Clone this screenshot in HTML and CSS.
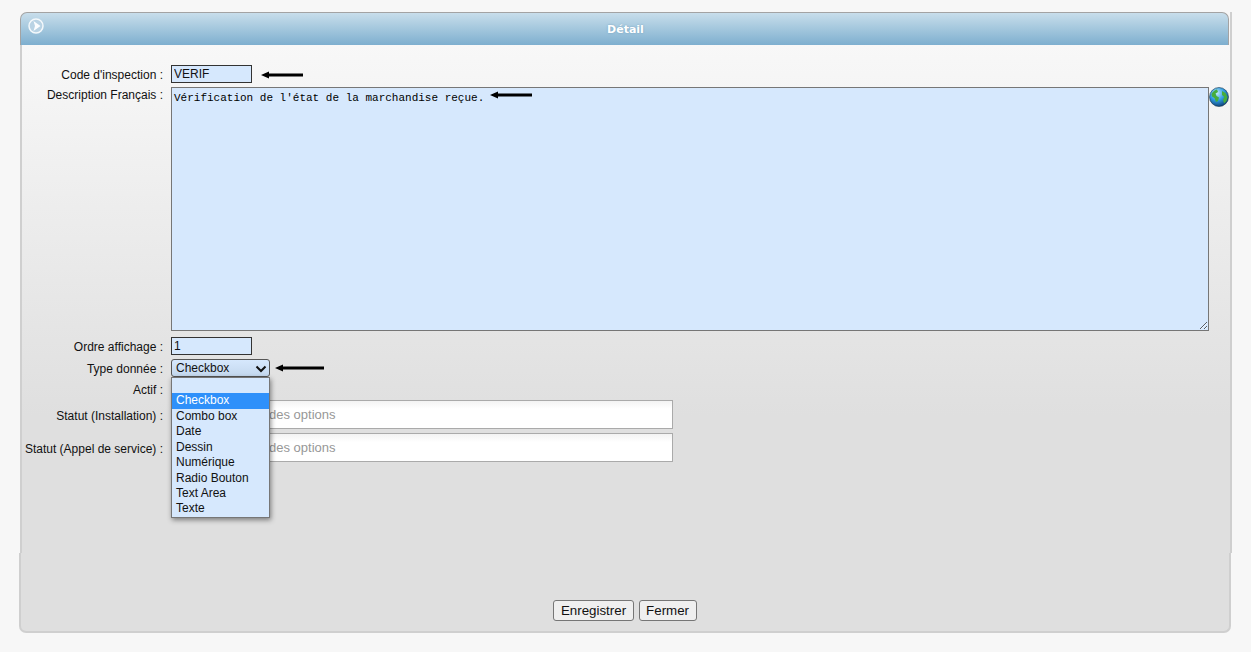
FILE: index.html
```html
<!DOCTYPE html>
<html lang="fr">
<head>
<meta charset="utf-8">
<title>Détail</title>
<link rel="stylesheet" href="styles.css">
</head>
<body>
<div class="panel">
  <div class="head">
    <svg class="head-icon" width="18" height="18" viewBox="0 0 18 18"><circle cx="9" cy="9" r="7" fill="#b9d3e4" stroke="#f4f8fb" stroke-width="1.500"/><path d="M6.500 4 13.500 9 6.500 14 8 9Z" fill="#fbfdfe"/></svg>
    <span class="head-title">Détail</span>
  </div>
  <div class="body">
    <form class="form">
      <label class="lbl lbl-code">Code d'inspection :</label>
      <div class="fld row-code">
        <input class="inp inp-short" type="text" value="VERIF">
        <svg class="arrow arrow-code" width="44" height="8" viewBox="0 0 44 8"><path d="M0 4 8 .5V2.500H42V5.500H8V7.500Z" fill="#000"/></svg>
      </div>
      <label class="lbl lbl-desc">Description Français :</label>
      <div class="fld row-desc">
        <textarea class="area">Vérification de l'état de la marchandise reçue.</textarea>
        <svg class="globe" width="20" height="20" viewBox="0 0 20 20"><defs><radialGradient id="g" cx=".4" cy=".3" r=".75"><stop offset="0" stop-color="#bfeaf8"/><stop offset=".5" stop-color="#2f9be0"/><stop offset="1" stop-color="#0b3a70"/></radialGradient></defs><circle cx="10" cy="10" r="9.500" fill="url(#g)" stroke="#12344d" stroke-width=".6"/><path d="M2.500 7C4 4.500 6 3 8 2.600L9 5 6.500 6.500 7.500 9 10 10.500 9 14 7 15 5.500 11 3 9.500ZM13 4 16.500 6 18.500 10 17.500 14 15 16.500 14 12.500 15.500 10 13 8Z" fill="#45ad3c"/></svg>
        <svg class="arrow arrow-desc" width="44" height="8" viewBox="0 0 44 8"><path d="M0 4 8 .5V2.500H42V5.500H8V7.500Z" fill="#000"/></svg>
      </div>
      <label class="lbl">Ordre affichage :</label>
      <div class="fld row-ordre"><input class="inp inp-short" type="text" value="1"></div>
      <label class="lbl">Type donnée :</label>
      <div class="fld row-type">
        <div class="select">Checkbox
          <svg class="chev" width="12" height="8" viewBox="0 0 12 8"><path d="M1.500 1.500 6 6 10.500 1.500" fill="none" stroke="#111" stroke-width="2"/></svg>
        </div>
        <svg class="arrow arrow-type" width="50" height="8" viewBox="0 0 50 8"><path d="M0 4 8 .5V2.500H49V5.500H8V7.500Z" fill="#000"/></svg>
        <ul class="menu">
          <li class="opt opt-empty"></li>
          <li class="opt opt-sel">Checkbox</li>
          <li class="opt">Combo box</li>
          <li class="opt">Date</li>
          <li class="opt">Dessin</li>
          <li class="opt">Numérique</li>
          <li class="opt">Radio Bouton</li>
          <li class="opt">Text Area</li>
          <li class="opt">Texte</li>
        </ul>
      </div>
      <label class="lbl lbl-actif">Actif :</label>
      <div class="fld row-actif"></div>
      <label class="lbl lbl-multi">Statut (Installation) :</label>
      <div class="fld"><div class="multi">des options</div></div>
      <label class="lbl lbl-multi">Statut (Appel de service) :</label>
      <div class="fld"><div class="multi">des options</div></div>
    </form>
  </div>
</div>
<div class="foot">
  <button class="btn" type="button">Enregistrer</button>
  <button class="btn" type="button">Fermer</button>
</div>
</body>
</html>
```
FILE: styles.css
```css
* { box-sizing: border-box; }
html, body { margin: 0; height: 100%; }
body {
  background: #f7f7f7;
  font-family: "Liberation Sans", Arial, sans-serif;
  font-size: 12px;
  color: #111;
  padding: 12px 0 0 20px;
  overflow: hidden;
}
.panel {
  width: 1212px;
  height: 541px;
  display: flex;
  flex-direction: column;
  border-right: 2px solid #cfcfcf;
}
.head {
  height: 33px;
  margin-right: 1px;
  border: 1px solid #a3a3a3;
  border-bottom: 0;
  border-radius: 7px 7px 0 0;
  background: linear-gradient(#c8deeb, #7eafcf);
  display: flex;
  align-items: center;
  justify-content: center;
  position: relative;
}
.head-icon { position: absolute; left: 6px; top: 4px; }
.head-title {
  color: #fff;
  font: bold 11px "DejaVu Sans", Verdana, sans-serif;
  margin-left: 2px;
  text-shadow: 0 0 2px #6f9dbb;
}
.body {
  flex: 1;
  border-left: 2px solid #cfcfcf;
  background: linear-gradient(#f8f8f8 0, #dfdfdf 370px, #dfdfdf 100%);
}
.form {
  display: grid;
  grid-template-columns: 141px 1fr;
  column-gap: 8px;
  row-gap: 4px;
  padding: 20px 0 0 0;
  align-items: start;
}
.lbl {
  text-align: right;
  height: 18px;
  line-height: 20px;
  white-space: nowrap;
}
.lbl-desc { line-height: 17px; }
.lbl-actif { height: 15px; line-height: 19px; }
.lbl-multi { height: 29px; line-height: 32px; }
.fld { position: relative; min-height: 18px; }
.inp {
  display: block;
  height: 18px;
  border: 1px solid #333;
  background: #d6e8fd;
  font: 12px "Liberation Sans", Arial, sans-serif;
  color: #111;
  padding: 0 2px;
  outline: none;
}
.inp-short { width: 81px; }
.row-code, .row-ordre { height: 18px; }
.row-desc { height: 246px; }
.area {
  display: block;
  width: 1038px;
  height: 244px;
  border: 1px solid #767676;
  background: #d6e8fd;
  font: 11px/13px "Liberation Mono", "Courier New", monospace;
  color: #000;
  padding: 4px 2px;
  outline: none;
}
.arrow { position: absolute; }
.arrow-code { left: 90px; top: 6px; }
.arrow-desc { left: 319px; top: 4px; }
.arrow-type { left: 104px; top: 5px; }
.globe { position: absolute; left: 1038px; top: 0; }
.select {
  width: 99px;
  height: 18px;
  background: linear-gradient(#d6e8fd, #c4d8ee);
  border: 1px solid #555;
  border-radius: 3px;
  padding-left: 4px;
  line-height: 16px;
  position: relative;
}
.chev { position: absolute; right: 2px; top: 5px; }
.menu {
  position: absolute;
  z-index: 2;
  left: 0;
  top: 18px;
  width: 99px;
  margin: 0;
  padding: 0;
  list-style: none;
  background: #d6e8fd;
  border: 1px solid #767676;
  box-shadow: 1px 2px 5px rgba(0, 0, 0, .45);
}
.opt {
  height: 15.4px;
  line-height: 15px;
  padding-left: 4px;
  white-space: nowrap;
}
.opt-empty { height: 15px; }
.opt-sel { background: #2e90fa; color: #fff; height: 16px; line-height: 15px; }
.row-actif { height: 15px; min-height: 15px; }
.multi {
  width: 502px;
  height: 29px;
  border: 1px solid #aaa;
  background: linear-gradient(#f3f3f3, #fff 8px);
  color: #979797;
  font-size: 13px;
  line-height: 27px;
  padding-left: 97px;
}
.foot {
  width: 1212px;
  height: 80px;
  margin-left: -1px;
  padding: 47px 0 0 0;
  background: #dfdfdf;
  border: 2px solid #cfcfcf;
  border-top: 0;
  border-radius: 0 0 7px 7px;
  display: flex;
  justify-content: center;
  align-items: flex-start;
  gap: 5px;
}
.btn {
  height: 21px;
  padding: 0 6.5px;
  background: #efefef;
  border: 1px solid #767676;
  border-radius: 3px;
  font: 13.33px "Liberation Sans", Arial, sans-serif;
  color: #111;
}
```
